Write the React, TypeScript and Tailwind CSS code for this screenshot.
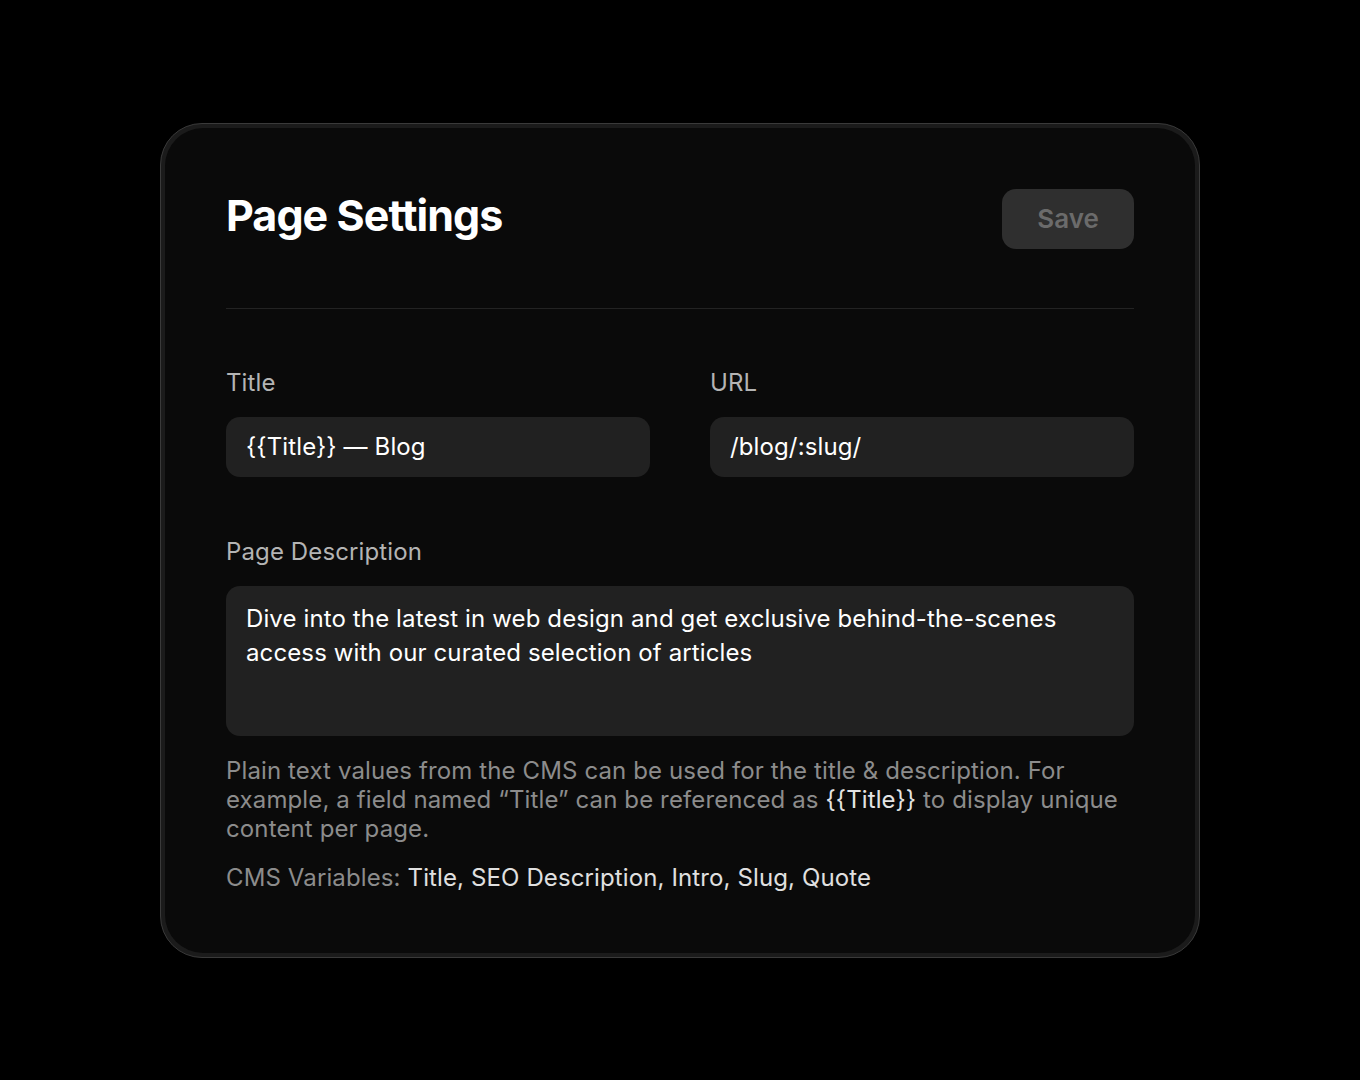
import * as React from "react";

const font = { fontFamily: "Inter, 'Noto Sans', sans-serif" };

function Field(props: { label: string; value: string }) {
  return (
    <div className="flex flex-col gap-5">
      <label className="text-[24px] leading-[29px] tracking-[0.005em] text-[#b4b4b4]">
        {props.label}
      </label>
      <div className="flex h-[60px] items-center rounded-[14px] bg-[#212121] px-5 text-[24px] tracking-[0.005em] text-white">
        {props.value}
      </div>
    </div>
  );
}

export default function App() {
  return (
    <div
      className="flex min-h-screen items-center justify-center bg-black antialiased"
      style={font}
    >
      <div className="w-[1040px] rounded-[42px] border border-[#3a3a3a] bg-[#1b1b1b] p-1">
        <div className="rounded-[38px] bg-[#0a0a0a] px-[61px] pb-[61px] pt-[61px]">
          <div className="flex items-center justify-between">
            <h1 className="pb-[7px] text-[43px] font-bold leading-none tracking-[-0.022em] text-white">
              Page Settings
            </h1>
            <button className="h-[60px] w-[132px] rounded-[14px] bg-[#2f2f2f] text-[26px] font-semibold text-[#6b6b6b]">
              Save
            </button>
          </div>

          <div className="mt-[59px] h-px bg-[#232323]" />

          <div className="mt-[59px] grid grid-cols-2 gap-[60px]">
            <Field label="Title" value="{{Title}} — Blog" />
            <Field label="URL" value="/blog/:slug/" />
          </div>

          <div className="mt-[60px] flex flex-col gap-5">
            <label className="text-[24px] leading-[29px] tracking-[0.005em] text-[#b4b4b4]">
              Page Description
            </label>
            <div className="h-[150px] rounded-[14px] bg-[#212121] px-5 pt-4 text-[24px] leading-[34px] tracking-[0.005em] text-white">
              Dive into the latest in web design and get exclusive behind-the-scenes access with
              our curated selection of articles
            </div>
          </div>

          <p className="mt-5 text-[24px] leading-[29px] tracking-[0.005em] text-[#8c8c8c]">
            Plain text values from the CMS can be used for the title &amp; description. For
            example, a field named “Title” can be referenced as{" "}
            <span className="text-[#e4e4e4]">{"{{Title}}"}</span> to display unique content per
            page.
          </p>
          <p className="mt-5 text-[24px] leading-[29px] tracking-[0.005em] text-[#8c8c8c]">
            CMS Variables:{" "}
            <span className="text-[#e0e0e0]">Title, SEO Description, Intro, Slug, Quote</span>
          </p>
        </div>
      </div>
    </div>
  );
}
